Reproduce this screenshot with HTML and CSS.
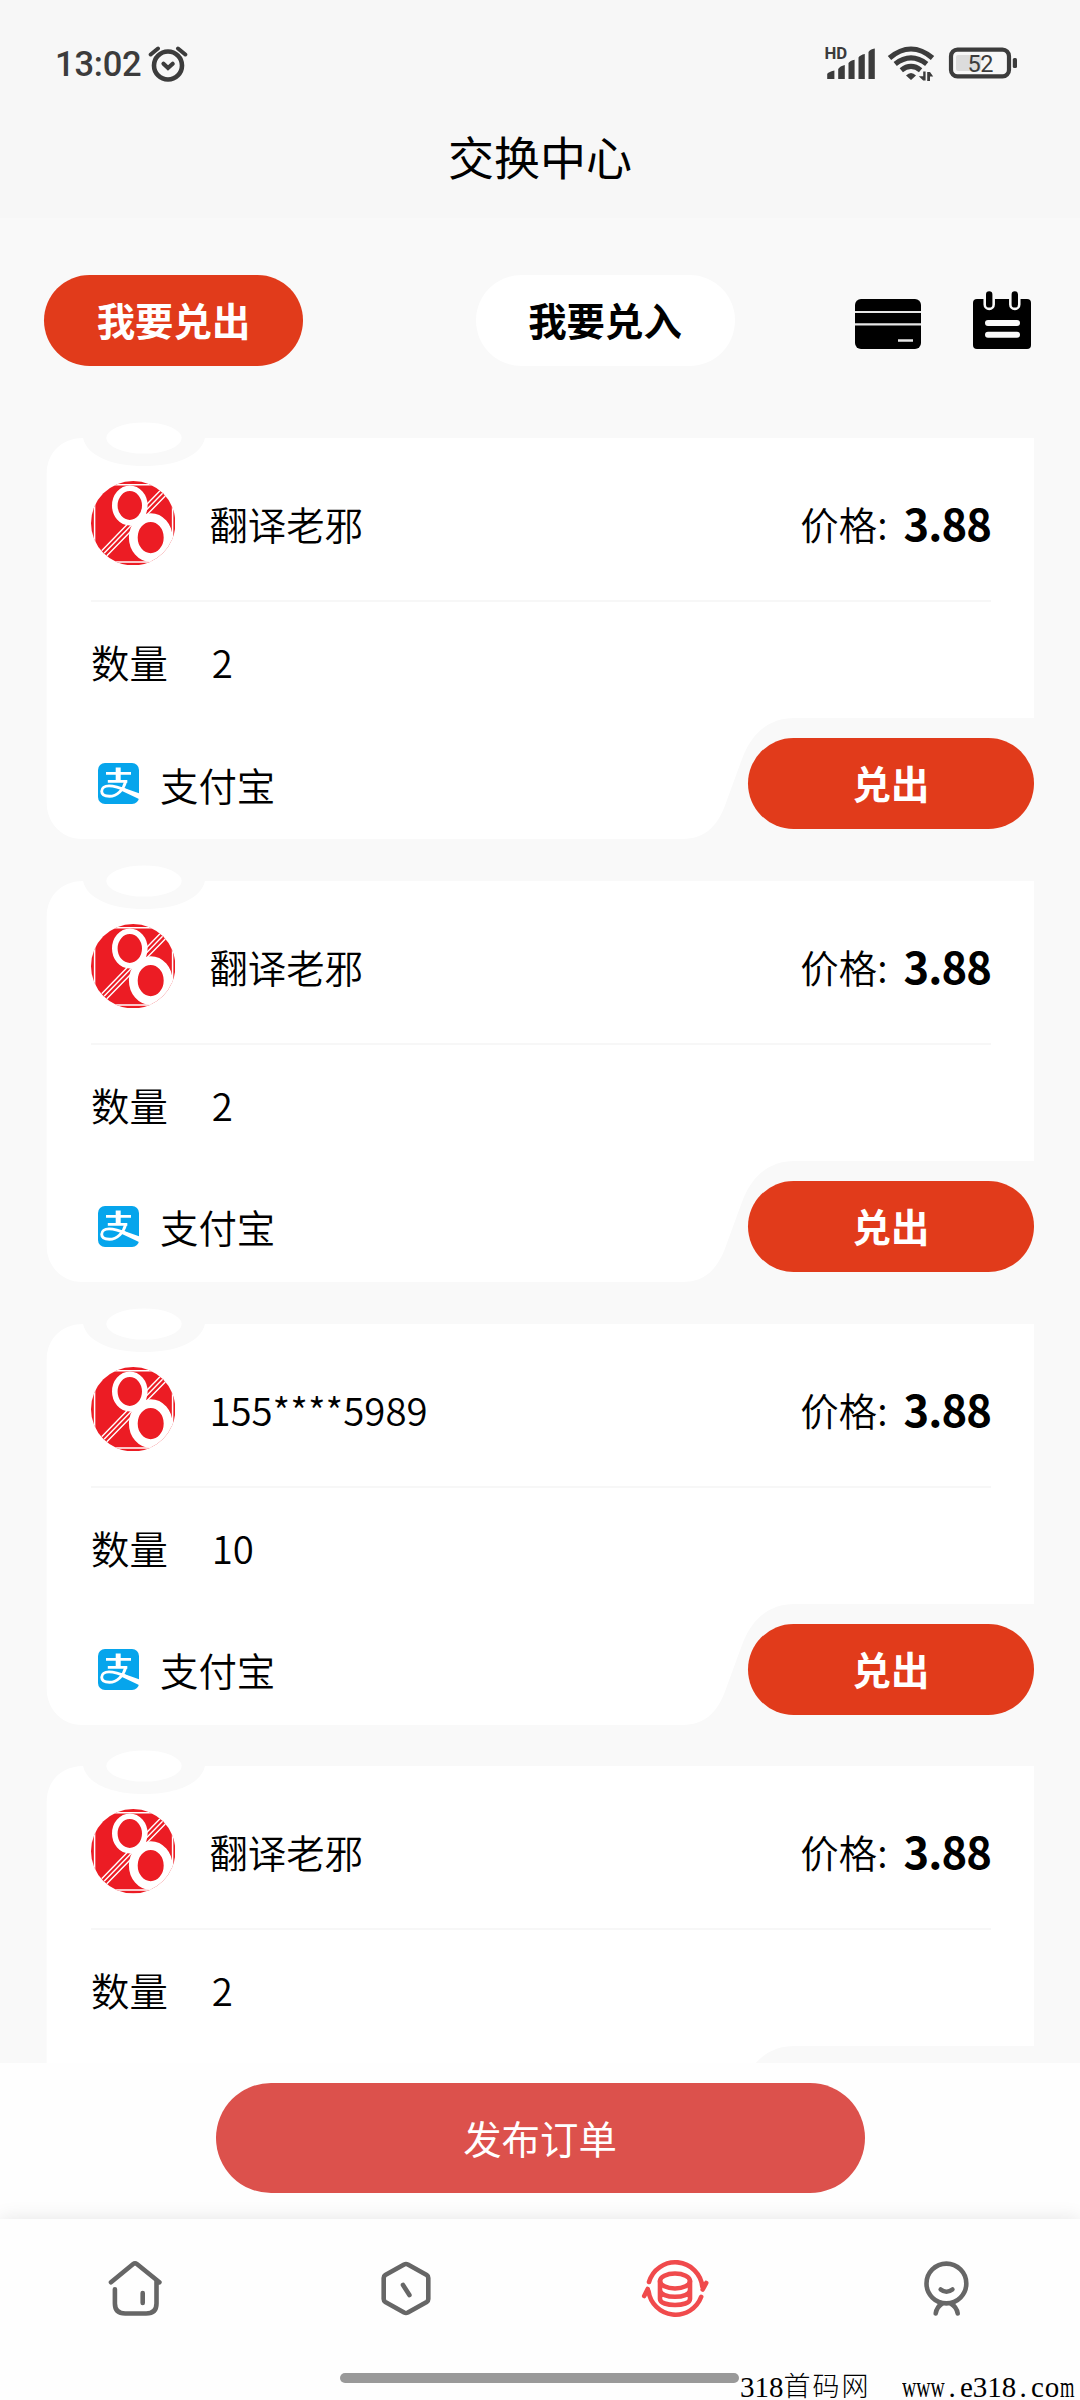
FILE: index.html
```html
<!DOCTYPE html>
<html lang="zh-CN">
<head>
<meta charset="utf-8">
<title>交换中心</title>
<link rel="stylesheet" href="styles.css">
</head>
<body>
<svg class="defs" aria-hidden="true">
  <clipPath id="avatar-clip"><circle cx="42.2" cy="42.2" r="42.2"/></clipPath>
  <symbol id="avatar" viewBox="0 0 84.4 84.4">
    <g clip-path="url(#avatar-clip)">
      <rect width="84.4" height="84.4" fill="#ec1c24"/>
      <path d="M3.6 0V84.4M81.6 0V84.4M0 3.7H84.4M0 81H84.4" stroke="#fff" stroke-width="1.5"/>
      <path d="M10.7 69.7L69 9.7M13.1 72.3L71.6 12.2M15.6 75L74.5 14.8" stroke="#fff" stroke-width="1.4"/>
      <ellipse cx="38.8" cy="24.5" rx="15" ry="17.2" fill="#ec1c24" stroke="#fff" stroke-width="5.6"/>
      <ellipse cx="59.7" cy="56.6" rx="17.4" ry="20" fill="#ec1c24" stroke="#fff" stroke-width="8.8"/>
      <path d="M62 84.4L84.4 62V84.4Z" fill="#fff"/>
    </g>
  </symbol>
  <symbol id="alipay" viewBox="0 0 41 41">
    <rect width="41" height="41" rx="7" fill="#06a5ec"/>
    <g fill="none" stroke="#fff">
      <path d="M8 10.3H33M9.8 18.4H29.3" stroke-width="2.8"/>
      <path d="M20.2 4.5V18.4" stroke-width="5"/>
      <path d="M27.800 18C25.5 27 19 33.3 11.5 33.3C6 33.3 3.7 31 3.7 28.3C3.7 25 6.5 22.9 11 22.9C17 22.9 24 25.6 29 27.8" stroke-width="2.9"/>
    </g>
    <path d="M24 24.300L41 30.3V36L24 28Z" fill="#fff"/>
  </symbol>
  <symbol id="ticket" viewBox="0 0 988 417">
    <path fill="#fff" d="M.7 52C.7 32 14 16.500 37 16C41 34 66 44 98 44C130 44 155 34 159 16H988V296H749C722 296 705 312 696 337L681 378C673 402 661 417 636 417H36C16 417 .7 401 .7 381Z"/>
    <ellipse fill="#fff" cx="98" cy="16" rx="37.700" ry="15.600"/>
  </symbol>
</svg>

<header class="header">
  <div class="status">
    <span class="clock">13:02</span>
    <svg class="alarm" width="40" height="38" viewBox="0 0 40 38" fill="none" stroke="#3c3c3c" stroke-linecap="round">
      <circle cx="20" cy="20.500" r="14" stroke-width="4.600"/>
      <path d="M2.700 9.500L10 3.500M37.300 9.500L30 3.500" stroke-width="4"/>
      <path d="M15.500 18.800L20 23L24.700 18.800" stroke-width="4.200"/>
    </svg>
    <svg class="signals" width="196" height="38" viewBox="824 45 196 38" fill="#3c3c3c">
      <text x="824.400" y="59.200" font-size="16.800" font-weight="700">HD</text>
      <path d="M827.200 79V74Q828 72 834.400 70.500V79ZM838.200 79V69Q840 66 844.800 65V79ZM848.500 79V63Q850 60.500 854.600 59.700V79ZM858.500 79V57.500Q860 55 864.800 54V79ZM868.500 79V52Q870 49 874.800 48.400V79Z"/>
      <g fill="none" stroke="#3c3c3c" stroke-width="5.200">
        <path d="M889.500 58Q900 49 911 49T932.500 58"/>
        <path d="M895.200 64Q903 57.900 911 57.900T926.700 64"/>
        <path d="M901.300 70.200Q906 66.400 911 66.400T920.600 70.200"/>
      </g>
      <path d="M906 75.500Q911 70.500 916 75.500L911 80Z"/>
      <path d="M923.200 71.500H925.600V80.500H923.200L918.800 76.200H923.200ZM927.200 72H930L933.200 76.500H930V81H927.200Z"/>
      <rect x="951" y="49.700" width="58" height="26.700" rx="6.500" fill="none" stroke="#3c3c3c" stroke-width="4.200"/>
      <rect x="956" y="55" width="25" height="16" rx="2" fill="#dcdcdc"/>
      <rect x="1012.800" y="58" width="4.200" height="10" rx="1.500"/>
      <text x="967.500" y="71.700" font-size="23.500" letter-spacing="-.5">52</text>
    </svg>
  </div>
  <h1 class="title">交换中心</h1>
</header>

<section class="tabs">
  <button class="tab tab-active">我要兑出</button>
  <button class="tab">我要兑入</button>
  <div class="tools">
    <svg width="66" height="50" viewBox="0 0 66 50">
      <rect width="66" height="50" rx="6"/>
      <path d="M0 13H66M0 25.300H66" stroke="#e6e6e6" stroke-width="2.200"/>
      <path d="M43 41.500H58" stroke="#e6e6e6" stroke-width="2.500"/>
    </svg>
    <svg width="58" height="58" viewBox="0 0 58 58">
      <rect y="8" width="58" height="50" rx="4"/>
      <path d="M16.200 0V13.400M41.800 0V13.400" stroke="#f9f9f9" stroke-width="11.500" stroke-linecap="round"/>
      <path d="M16.200 3.500V13.400M41.800 3.500V13.400" stroke="#000" stroke-width="6.400" stroke-linecap="round"/>
      <path d="M15 32H44M15 43.700H44" stroke="#f9f9f9" stroke-width="6" stroke-linecap="round"/>
    </svg>
  </div>
</section>

<main class="list">
  <article class="card">
    <svg class="card-shape"><use href="#ticket"/></svg>
    <div class="card-head">
      <svg class="avatar"><use href="#avatar"/></svg>
      <span class="name">翻译老邪</span>
      <span class="price-label">价格:</span><b class="price">3.88</b>
    </div>
    <div class="amount"><span>数量</span><span>2</span></div>
    <div class="card-foot">
      <svg class="pay"><use href="#alipay"/></svg><span>支付宝</span>
      <button class="sell">兑出</button>
    </div>
  </article>
  <article class="card">
    <svg class="card-shape"><use href="#ticket"/></svg>
    <div class="card-head">
      <svg class="avatar"><use href="#avatar"/></svg>
      <span class="name">翻译老邪</span>
      <span class="price-label">价格:</span><b class="price">3.88</b>
    </div>
    <div class="amount"><span>数量</span><span>2</span></div>
    <div class="card-foot">
      <svg class="pay"><use href="#alipay"/></svg><span>支付宝</span>
      <button class="sell">兑出</button>
    </div>
  </article>
  <article class="card">
    <svg class="card-shape"><use href="#ticket"/></svg>
    <div class="card-head">
      <svg class="avatar"><use href="#avatar"/></svg>
      <span class="name">155****5989</span>
      <span class="price-label">价格:</span><b class="price">3.88</b>
    </div>
    <div class="amount"><span>数量</span><span>10</span></div>
    <div class="card-foot">
      <svg class="pay"><use href="#alipay"/></svg><span>支付宝</span>
      <button class="sell">兑出</button>
    </div>
  </article>
  <article class="card">
    <svg class="card-shape"><use href="#ticket"/></svg>
    <div class="card-head">
      <svg class="avatar"><use href="#avatar"/></svg>
      <span class="name">翻译老邪</span>
      <span class="price-label">价格:</span><b class="price">3.88</b>
    </div>
    <div class="amount"><span>数量</span><span>2</span></div>
  </article>
</main>

<div class="publish-bar"><button class="publish">发布订单</button></div>

<nav class="nav">
  <svg class="nav-icon" viewBox="103.300 2257 64 64"><path d="M111.300 2282.300L133.500 2264Q135.300 2262.600 137.200 2264L159.700 2282.300M115.200 2289.300V2303.500Q115.200 2313.500 125.500 2313.500H146.500Q156.800 2313.500 156.800 2303.500V2281M143 2293V2303"/></svg>
  <svg class="nav-icon" viewBox="373.300 2257 64 64"><path d="M404.400 2264.500Q406.300 2263.500 408.200 2264.500L427 2275Q428.600 2276 428.600 2278V2299Q428.600 2301 427 2302L408.200 2312.500Q406.300 2313.500 404.400 2312.500L385.600 2302Q384 2301 384 2299V2278Q384 2276 385.600 2275ZM403.300 2285L409.700 2295"/></svg>
  <svg class="nav-icon nav-current" viewBox="643.300 2257 64 64">
    <path d="M649.300 2282A27.300 27.300 0 0 1 702.700 2287M701.500 2296.800A27.300 27.300 0 0 1 648.800 2291M703 2289.500L706.500 2283M648 2289L644.500 2296"/>
    <ellipse cx="675.300" cy="2281" rx="15" ry="7.500"/>
    <path d="M660.300 2281V2299C660.300 2307 690.300 2307 690.300 2299V2281M660.300 2290C660.300 2299 690.300 2299 690.300 2290"/>
  </svg>
  <svg class="nav-icon" viewBox="913.300 2257 64 64"><circle cx="946.700" cy="2283.500" r="19.900"/><path d="M941 2289.500Q946.700 2294 952.700 2289.500M936 2313.500Q937 2307 942.500 2303.500M951 2303.500Q957 2307 958 2313.500"/></svg>
</nav>
<div class="home-bar"></div>
<div class="watermark">
  <span>318</span><span class="wm-cjk">首码网</span>
  <span class="wm-wide">www</span><span class="wm-dot">.</span><span>e318</span><span class="wm-dot">.</span><span class="wm-co">co</span><span class="wm-m">m</span>
</div>
</body>
</html>
```
FILE: styles.css
```css
* { box-sizing: border-box; }
body {
  margin: 0;
  width: 1080px;
  height: 2400px;
  overflow: hidden;
  position: relative;
  display: flex;
  flex-direction: column;
  background: #f9f9f9;
  color: #000;
  font: 38.4px/56px "Noto Sans CJK SC", sans-serif;
}
svg { display: block; flex: none; }
button { border: 0; padding: 0; font: inherit; color: inherit; }
.defs { position: absolute; width: 0; height: 0; }

.header { flex: none; height: 218px; background: #f7f7f7; }
.status {
  display: flex;
  align-items: center;
  height: 128px;
  padding: 0 60px 0 55px;
  font-family: Roboto, sans-serif;
  color: #3c3c3c;
}
.clock { width: 93px; font-size: 34.5px; font-weight: 500; letter-spacing: -.2px; }
.signals { margin-left: auto; font-family: Roboto, sans-serif; }
.title { margin: 0; text-align: center; font-size: 46px; font-weight: 400; line-height: 54px; }

.tabs { flex: none; display: flex; height: 204px; padding: 57px 49px 0 44px; }
.tab {
  width: 259px;
  height: 91px;
  margin-right: 172.500px;
  padding-bottom: 3px;
  border-radius: 46px;
  background: #fff;
  font-weight: 700;
}
.tab + .tab { margin-right: auto; }
.tab-active { background: #e13b1b; color: #fff; }
.tools { display: flex; align-items: flex-end; gap: 52px; height: 74px; }

.list { flex: 1; min-height: 0; overflow: hidden; padding: 0 46px; }
.card {
  position: relative;
  width: 988px;
  height: 417px;
  margin-bottom: 25.8px;
  padding: 59px 43px 0 45px;
}
.card-shape { position: absolute; left: 0; top: 0; width: 988px; height: 417px; }
.card-head {
  position: relative;
  display: flex;
  height: 121px;
  border-bottom: 2px solid #f7f7f7;
}
.avatar { width: 84.400px; height: 84.400px; }
.name { margin: 14px auto 0 34px; font-weight: 350; }
.price-label { margin: 14px 16px 0 0; font-weight: 350; }
.price { margin-top: 14px; font-size: 43.500px; font-weight: 700; letter-spacing: -.9px; }
.amount { position: relative; display: flex; gap: 44px; height: 119px; padding-top: 31px; font-weight: 350; }
.card-foot {
  position: relative;
  display: flex;
  align-items: center;
  gap: 21px;
  height: 91px;
  margin: 17px -43px 0 7px;
  font-weight: 350;
}
.pay { width: 41px; height: 41px; }
.sell {
  width: 286px;
  height: 91px;
  margin-left: auto;
  padding-bottom: 3px;
  border-radius: 46px;
  background: #e13b1b;
  color: #fff;
  font-weight: 700;
}

.publish-bar { flex: none; height: 156px; padding-top: 20px; background: #fefefe; }
.publish {
  display: block;
  width: 649px;
  height: 110px;
  margin: 0 auto;
  padding-bottom: 2px;
  border-radius: 55px;
  background: #dc514c;
  color: #fff;
}
.nav {
  flex: none;
  display: flex;
  justify-content: space-around;
  height: 181px;
  padding-top: 38px;
  background: #fefefe;
  box-shadow: 0 -1px 18px rgba(0, 0, 0, .09);
}
.nav-icon {
  width: 64px;
  height: 64px;
  overflow: visible;
  fill: none;
  stroke: #666;
  stroke-width: 4.600px;
  stroke-linecap: round;
  stroke-linejoin: round;
}
.nav-current { stroke: #f04a4c; }
.home-bar {
  position: absolute;
  left: 340px;
  top: 2373px;
  width: 399px;
  height: 10px;
  border-radius: 5px;
  background: #999;
}
.watermark {
  position: absolute;
  left: 740px;
  top: 2370px;
  display: flex;
  height: 30px;
  font: 29px/34px "Liberation Serif", serif;
}
.wm-cjk { margin-right: 31px; font: 300 27px/29px "Noto Sans CJK SC", sans-serif; letter-spacing: 2px; }
.wm-wide { width: 44px; transform: scaleX(.68); transform-origin: left; }
.wm-dot { width: 14.500px; padding-left: 3px; }
.wm-co { letter-spacing: 1px; }
.wm-m { width: 14px; transform: scaleX(.64); transform-origin: left; }
```
